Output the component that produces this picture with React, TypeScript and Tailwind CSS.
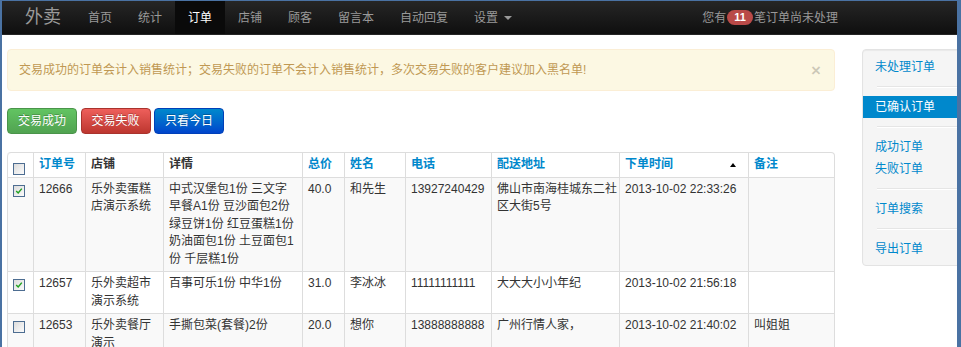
import React from 'react';

const FONT = 'font-["Liberation_Sans","Noto_Sans_CJK_SC",sans-serif]';

const navItems = ['首页', '统计', '订单', '店铺', '顾客', '留言本', '自动回复'];

interface Order {
  id: string;
  checked: boolean;
  shop: string[];
  detail: string[];
  total: string;
  name: string;
  phone: string;
  address: string[];
  time: string;
  note: string;
}

const orders: Order[] = [
  {
    id: '12666',
    checked: true,
    shop: ['乐外卖蛋糕', '店演示系统'],
    detail: ['中式汉堡包1份 三文字', '早餐A1份 豆沙面包2份', '绿豆饼1份 红豆蛋糕1份', '奶油面包1份 土豆面包1', '份 千层糕1份'],
    total: '40.0',
    name: '和先生',
    phone: '13927240429',
    address: ['佛山市南海桂城东二社', '区大街5号'],
    time: '2013-10-02 22:33:26',
    note: '',
  },
  {
    id: '12657',
    checked: true,
    shop: ['乐外卖超市', '演示系统'],
    detail: ['百事可乐1份 中华1份'],
    total: '31.0',
    name: '李冰冰',
    phone: '11111111111',
    address: ['大大大小小年纪'],
    time: '2013-10-02 21:56:18',
    note: '',
  },
  {
    id: '12653',
    checked: false,
    shop: ['乐外卖餐厅', '演示'],
    detail: ['手撕包菜(套餐)2份'],
    total: '20.0',
    name: '想你',
    phone: '13888888888',
    address: ['广州行情人家，'],
    time: '2013-10-02 21:40:02',
    note: '叫姐姐',
  },
];

const Checkbox = ({ checked }: { checked: boolean }) => (
  <span className="relative block w-[12px] h-[12px] border border-[#4d6d91] bg-linear-to-br from-[#dcdcdc] to-[#fbfbfb]">
    {checked && (
      <svg viewBox="0 0 10 10" className="absolute left-[1px] top-[1px] w-[8px] h-[8px]">
        <path d="M1.5 5 L4 7.5 L8.5 2" fill="none" stroke="#21a121" strokeWidth="1.8" />
      </svg>
    )}
  </span>
);

const Lines = ({ lines }: { lines: string[] }) => (
  <>
    {lines.map((l, i) => (
      <div key={i} className="whitespace-nowrap">
        {l}
      </div>
    ))}
  </>
);

const th = 'border-l border-[#ddd] px-[5px] py-[3px] leading-[17.5px] text-left font-bold align-top';
const td = 'border-l border-t border-[#ddd] px-[5px] py-[3px] leading-[17.5px] align-top';

const SideItem = ({ label, active }: { label: string; active?: boolean }) => (
  <div
    className={`h-[22px] leading-[22px] pl-[12px] ${
      active ? 'bg-[#0088cc] text-white' : 'text-[#0088cc]'
    }`}
  >
    {label}
  </div>
);

const Divider = () => (
  <div className="my-[8px] ml-[14px] h-[1px] bg-[#e5e5e5] border-b border-white box-content" />
);

export default function App() {
  return (
    <div
      className={`${FONT} w-[961px] h-[347px] overflow-hidden bg-white border-l-2 border-t border-r-4 border-[#4a72a3] text-[12px] text-[#333]`}
    >
      {/* navbar */}
      <div className="h-[34px] flex items-stretch bg-linear-to-b from-[#262626] to-[#0f0f0f] border-b border-[#252525] text-[#999]">
        <div className="w-[73px] pl-[23px] flex items-center text-[18px] text-[#999]">外卖</div>
        {navItems.map((item) => (
          <div
            key={item}
            className={`px-[13px] flex items-center ${
              item === '订单' ? 'bg-[#0a0a0a] text-white' : ''
            }`}
          >
            {item}
          </div>
        ))}
        <div className="px-[13px] flex items-center">
          设置
          <span className="ml-[6px] mt-[1px] w-0 h-0 border-l-[4px] border-r-[4px] border-t-[4px] border-l-transparent border-r-transparent border-t-[#999]" />
        </div>
        <div className="ml-auto mr-[119px] flex items-center">
          您有
          <span className="mx-[1px] h-[15px] px-[7px] rounded-full bg-[#b94a48] text-white text-[11px] font-bold leading-[15px]">
            11
          </span>
          笔订单尚未处理
        </div>
      </div>

      {/* body */}
      <div className="flex px-[5px] pt-[14px]">
        <div className="w-[828px] shrink-0">
          <div className="h-[42px] flex items-center justify-between pl-[11px] pr-[13px] bg-[#fcf8e3] border border-[#fbeed5] rounded-[4px] text-[#c09853]">
            <span>交易成功的订单会计入销售统计；交易失败的订单不会计入销售统计，多次交易失败的客户建议加入黑名单!</span>
            <span className="text-[17px] font-bold text-black/20 leading-none">×</span>
          </div>

          <div className="mt-[17px] flex gap-[3.5px]">
            <button className="w-[70px] h-[26px] rounded-[4px] text-white bg-linear-to-b from-[#62c462] to-[#51a351] border border-[#4a944a] [text-shadow:0_-1px_0_rgba(0,0,0,0.25)]">
              交易成功
            </button>
            <button className="w-[70px] h-[26px] rounded-[4px] text-white bg-linear-to-b from-[#ee5f5b] to-[#bd362f] border border-[#a9332d] [text-shadow:0_-1px_0_rgba(0,0,0,0.25)]">
              交易失败
            </button>
            <button className="w-[70px] h-[26px] rounded-[4px] text-white bg-linear-to-b from-[#0088cc] to-[#0044cc] border border-[#0040b8] [text-shadow:0_-1px_0_rgba(0,0,0,0.25)]">
              只看今日
            </button>
          </div>

          <table className="mt-[18px] w-[828px] table-fixed border-separate border-spacing-0 border border-l-0 border-[#ddd] rounded-[4px]">
            <thead>
              <tr>
                <th className={`${th} w-[26px] px-[4px] rounded-tl-[4px]`}>
                  <div className="h-[17.5px] pt-[7px]">
                    <Checkbox checked={false} />
                  </div>
                </th>
                <th className={`${th} w-[52px] text-[#0088cc]`}>订单号</th>
                <th className={`${th} w-[78px]`}>店铺</th>
                <th className={`${th} w-[139px]`}>详情</th>
                <th className={`${th} w-[42px] text-[#0088cc]`}>总价</th>
                <th className={`${th} w-[61px] text-[#0088cc]`}>姓名</th>
                <th className={`${th} w-[86px] text-[#0088cc]`}>电话</th>
                <th className={`${th} w-[128px] text-[#0088cc]`}>配送地址</th>
                <th className={`${th} w-[129px] text-[#0088cc]`}>
                  <div className="flex items-center justify-between pr-[7px]">
                    下单时间
                    <span className="w-0 h-0 border-l-[3px] border-r-[3px] border-b-[4px] border-l-transparent border-r-transparent border-b-black" />
                  </div>
                </th>
                <th className={`${th} w-[86px] text-[#0088cc] rounded-tr-[4px]`}>备注</th>
              </tr>
            </thead>
            <tbody>
              {orders.map((o, i) => (
                <tr key={o.id} className={i % 2 === 0 ? 'bg-[#f9f9f9]' : 'bg-white'}>
                  <td className={`${td} px-[4px]`}>
                    <div className="h-[17.5px] pt-[4px]">
                      <Checkbox checked={o.checked} />
                    </div>
                  </td>
                  <td className={td}>{o.id}</td>
                  <td className={td}>
                    <Lines lines={o.shop} />
                  </td>
                  <td className={td}>
                    <Lines lines={o.detail} />
                  </td>
                  <td className={td}>{o.total}</td>
                  <td className={td}>{o.name}</td>
                  <td className={td}>{o.phone}</td>
                  <td className={td}>
                    <Lines lines={o.address} />
                  </td>
                  <td className={td}>{o.time}</td>
                  <td className={td}>{o.note}</td>
                </tr>
              ))}
            </tbody>
          </table>
        </div>

        {/* sidebar */}
        <div className="ml-[27px] w-[120px] shrink-0 self-start pt-[6px] pb-[5px] bg-[#f5f5f5] border border-[#e3e3e3] rounded-[4px] shadow-[inset_0_1px_1px_rgba(0,0,0,0.05)]">
          <SideItem label="未处理订单" />
          <Divider />
          <SideItem label="已确认订单" active />
          <Divider />
          <SideItem label="成功订单" />
          <SideItem label="失败订单" />
          <Divider />
          <SideItem label="订单搜索" />
          <Divider />
          <SideItem label="导出订单" />
        </div>
      </div>
    </div>
  );
}
